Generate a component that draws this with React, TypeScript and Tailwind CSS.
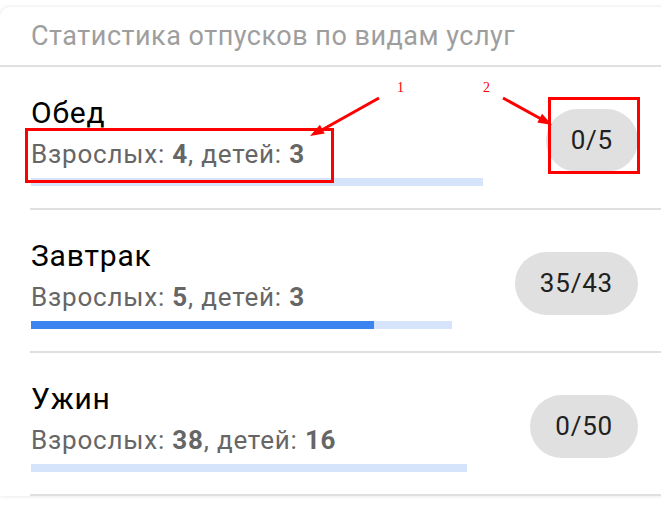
const services = [
  { name: "Обед", adults: 4, kids: 3, done: 0, total: 5, barW: "w-[452px]" },
  { name: "Завтрак", adults: 5, kids: 3, done: 35, total: 43, barW: "w-[421px]" },
  { name: "Ужин", adults: 38, kids: 16, done: 0, total: 50, barW: "w-[436px]" },
];

const ServiceRow = ({ item }: { item: (typeof services)[number] }) => {
  const pct = item.total ? (item.done / item.total) * 100 : 0;
  return (
    <div className="ml-[30px] flex items-center border-b-2 border-[#e0e0e0] pl-px pr-[23px] pt-[28px] pb-[22px]">
      <div className="flex-1">
        <div className="text-[30px] leading-[36px] tracking-[0.8px] text-black">{item.name}</div>
        <div className="mt-[7px] text-[26px] leading-[32px] tracking-[0.8px] text-[#666666]">
          Взрослых: <b className="font-bold">{item.adults}</b>, детей:{" "}
          <b className="font-bold">{item.kids}</b>
        </div>
        <div className={`mt-[8px] h-[8px] bg-[#d6e4fb] ${item.barW}`}>
          <div className="h-full bg-[#3d84f0]" style={{ width: `${pct}%` }} />
        </div>
      </div>
      <div className="flex h-[63px] items-center rounded-full bg-[#e0e0e0] px-[25px] text-[26px] tracking-[0.8px] text-[#212121]">
        {item.done}/{item.total}
      </div>
    </div>
  );
};

export default function App() {
  return (
    <div
      className="relative h-[505px] w-[661px] overflow-hidden bg-white"
      style={{ fontFamily: "Roboto, 'Noto Sans', sans-serif" }}
    >
      <div className="mt-[7px] w-[680px] rounded-tl-[10px] bg-white shadow-[0_0_4px_rgba(0,0,0,0.12)]">
        <div className="flex h-[60px] items-center border-b-2 border-[#e0e0e0] pl-[31px] text-[27px] tracking-[0.5px] text-[#9e9e9e]">
          Статистика отпусков по видам услуг
        </div>
        <div className="w-[661px]">
          {services.map((s) => (
            <ServiceRow key={s.name} item={s} />
          ))}
        </div>
      </div>

      {/* annotations */}
      <div className="absolute left-[25px] top-[128px] h-[55px] w-[309px] border-[3px] border-[#ff0000]" />
      <div className="absolute left-[548px] top-[97px] h-[77px] w-[92px] border-[3px] border-[#ff0000]" />
      <span
        className="absolute left-[397px] top-[80px] text-[14px] leading-[16px] text-[#ff0000]"
        style={{ fontFamily: "'Liberation Serif', serif" }}
      >
        1
      </span>
      <span
        className="absolute left-[483px] top-[80px] text-[14px] leading-[16px] text-[#ff0000]"
        style={{ fontFamily: "'Liberation Serif', serif" }}
      >
        2
      </span>
      <svg className="pointer-events-none absolute inset-0" width="661" height="505">
        <line x1="379" y1="98" x2="320" y2="131" stroke="#ff0000" strokeWidth="3" />
        <polygon points="310,136 324.7,133.6 319.9,124.8" fill="#ff0000" />
        <line x1="503" y1="98" x2="543" y2="120" stroke="#ff0000" strokeWidth="3" />
        <polygon points="552,125 537.3,122.6 542.1,113.8" fill="#ff0000" />
      </svg>
    </div>
  );
}
